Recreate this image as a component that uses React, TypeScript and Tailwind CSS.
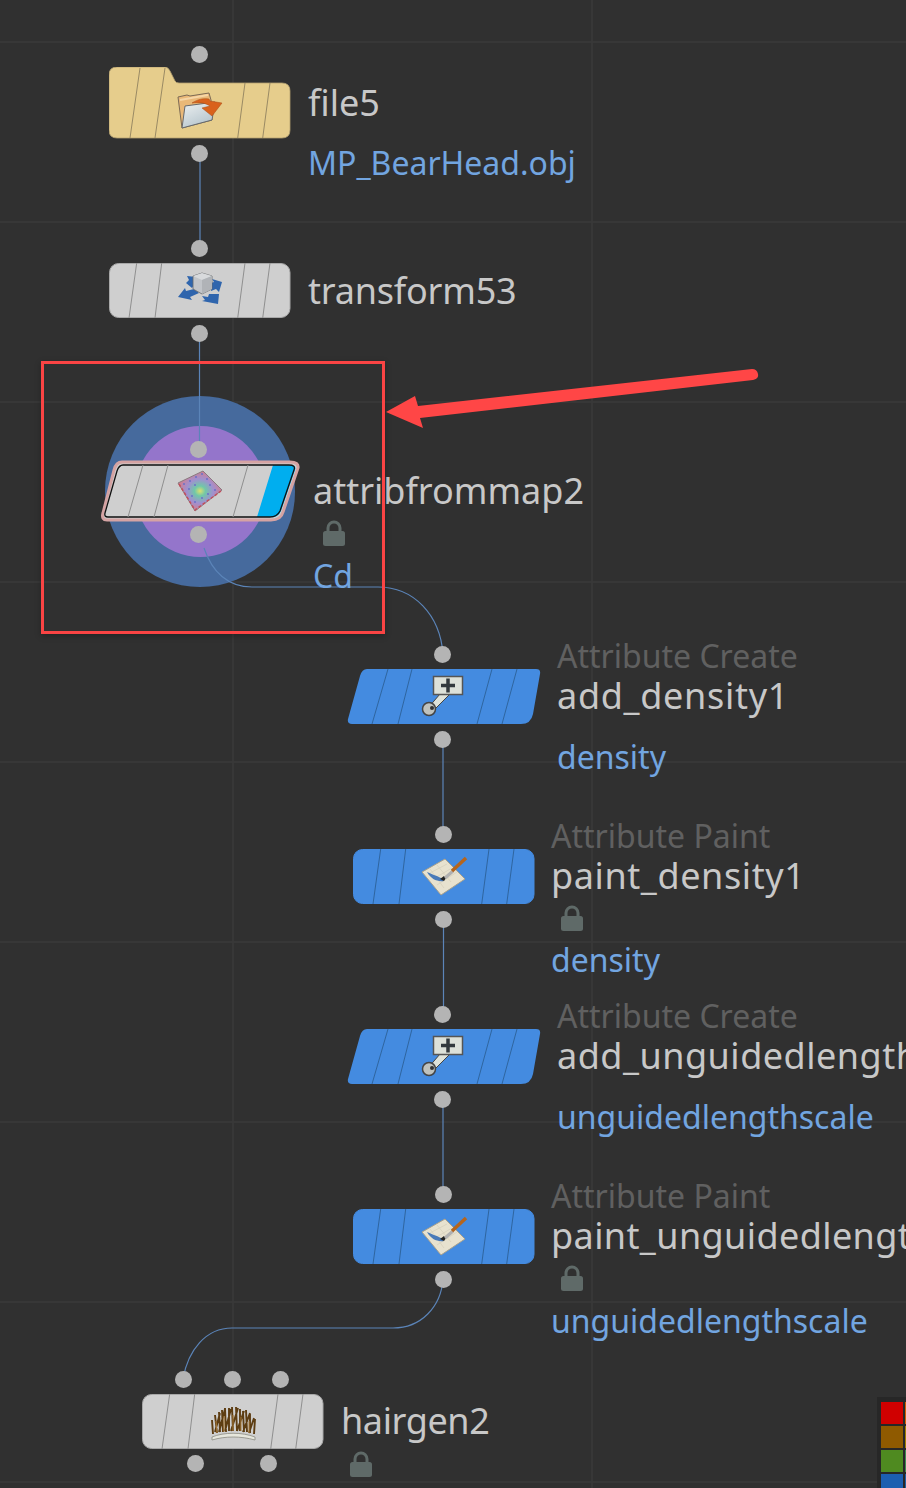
const wire = "#5b84b8"

// little grey connector dots, page coordinates
const dots: { key: string; cn: string }[] = [
  { key: "a", cn: "left-[191px] top-[46px]" },
  { key: "b", cn: "left-[191px] top-[145px]" },
  { key: "c", cn: "left-[191px] top-[240px]" },
  { key: "d", cn: "left-[191px] top-[325px]" },
  { key: "e", cn: "left-[190px] top-[441px]" },
  { key: "f", cn: "left-[190px] top-[526px]" },
  { key: "g", cn: "left-[434px] top-[646px]" },
  { key: "h", cn: "left-[434px] top-[731px]" },
  { key: "i", cn: "left-[435px] top-[826px]" },
  { key: "j", cn: "left-[435px] top-[911px]" },
  { key: "k", cn: "left-[434px] top-[1006px]" },
  { key: "l", cn: "left-[434px] top-[1091px]" },
  { key: "m", cn: "left-[435px] top-[1186px]" },
  { key: "n", cn: "left-[435px] top-[1271px]" },
  { key: "o", cn: "left-[175px] top-[1371px]" },
  { key: "p", cn: "left-[224px] top-[1371px]" },
  { key: "q", cn: "left-[272px] top-[1371px]" },
  { key: "r", cn: "left-[187px] top-[1455px]" },
  { key: "s", cn: "left-[260px] top-[1455px]" },
]

const name = "text-[36px] text-[#c8c8c8]"
const sub = "text-[32px] text-[#72a5e0]"
const kind = "text-[32px] text-[#606060]"

const labels: { text: string; cn: string }[] = [
  { text: "file5", cn: `left-[308px] top-[79px] ${name}` },
  { text: "MP_BearHead.obj", cn: `left-[308px] top-[139px] ${sub}` },
  { text: "transform53", cn: `left-[308px] top-[267px] tracking-[-0.2px] ${name}` },
  { text: "attribfrommap2", cn: `left-[313px] top-[467px] ${name}` },
  { text: "Cd", cn: `left-[313px] top-[552px] ${sub}` },
  { text: "Attribute Create", cn: `left-[557px] top-[632px] ${kind}` },
  { text: "add_density1", cn: `left-[557px] top-[672px] tracking-[0.7px] ${name}` },
  { text: "density", cn: `left-[557px] top-[733px] ${sub}` },
  { text: "Attribute Paint", cn: `left-[551px] top-[812px] ${kind}` },
  { text: "paint_density1", cn: `left-[551px] top-[852px] tracking-[0.6px] ${name}` },
  { text: "density", cn: `left-[551px] top-[936px] ${sub}` },
  { text: "Attribute Create", cn: `left-[557px] top-[992px] ${kind}` },
  { text: "add_unguidedlengthscale", cn: `left-[557px] top-[1032px] tracking-[0.5px] ${name}` },
  { text: "unguidedlengthscale", cn: `left-[557px] top-[1093px] ${sub}` },
  { text: "Attribute Paint", cn: `left-[551px] top-[1172px] ${kind}` },
  { text: "paint_unguidedlengthscale", cn: `left-[551px] top-[1212px] tracking-[0.4px] ${name}` },
  { text: "unguidedlengthscale", cn: `left-[551px] top-[1297px] ${sub}` },
  { text: "hairgen2", cn: `left-[341px] top-[1397px] tracking-[-0.4px] ${name}` },
]

const Lock = ({ cn }: { cn: string }) => (
  <svg className={`absolute ${cn}`} width="22" height="26" viewBox="0 0 22 26">
    <path d="M5 12V8a6 6 0 0 1 12 0v4" fill="none" stroke="#5f6a68" strokeWidth="3" />
    <rect x="0" y="11" width="22" height="15" rx="2.5" fill="#5f6a68" />
  </svg>
)

const Stripes = ({ lines, color = "#8f8f8f" }: { lines: number[][]; color?: string }) => (
  <g stroke={color} strokeWidth="1">
    {lines.map((l) => (
      <line key={l[0]} x1={l[0]} y1="0" x2={l[1]} y2="55" />
    ))}
  </g>
)

const straightLines = [[27.7, 20], [52.7, 46], [136, 128.7], [161, 153.7]]
const slantLines = [[41, 25], [65, 51], [145, 130], [170, 155]]

const FolderIcon = () => (
  <g>
    <defs>
      <linearGradient id="paper" x1="0" y1="0" x2="0.6" y2="1">
        <stop offset="0" stopColor="#eef1f2" />
        <stop offset="1" stopColor="#b4c4cc" />
      </linearGradient>
    </defs>
    <path d="M-1 5l9-2 3 1 19-3 2 7 1 20L3 36z" fill="#e9b878" stroke="#7c6a55" strokeWidth="1" />
    <path d="M1 8l28-5" stroke="#f6d6a6" strokeWidth="2" />
    <path d="M6 14l30-4-3 18L3 36z" fill="url(#paper)" stroke="#66696c" strokeWidth="1" />
    <path d="M13 11c6-4 12-5 17-4l1 2 12 2-10 13-10-8 8-2c-4-3-11-4-18-3z" fill="#d9621c" stroke="#a84a14" strokeWidth="0.5" />
  </g>
)

const CubeIcon = () => (
  <g>
    {/* four flat arrows */}
    <path d="M9 4l9 1 1 9-3-1-2 3-6-5 3-3z" fill="#2f65ad" />
    <path d="M0 25l7-9 1 3 8-2 5 4-9 4 2 3z" fill="#2f65ad" />
    <path d="M24 24l6 1 1-3 10 0-1 10-16-3 3-1z" fill="#2f65ad" />
    <path d="M34 7l10 3-3 10-3-3-5 2 0-8 3-1z" fill="#2f65ad" />
    {/* cube */}
    <path d="M15 4l9-3 10 3v13l-10 5-9-5z" fill="#c2c5c9" stroke="#66686b" strokeWidth="0.8" />
    <path d="M15 4l9-3 10 3-10 4z" fill="#d8dadc" />
    <path d="M24 8l10-4v13l-10 5z" fill="#b0b3b7" />
  </g>
)

const mapDots: number[][] = [
  [6, 13], [12, 10], [18, 6], [24, 3],
  [11, 18], [17, 14], [29, 8],
  [14, 25], [32, 14], [37, 19],
  [17, 31], [24, 27], [30, 23],
]

const MapIcon = () => (
  <g>
    <defs>
      <radialGradient id="heat">
        <stop offset="0" stopColor="#dce070" />
        <stop offset="0.25" stopColor="#70c8a8" />
        <stop offset="0.6" stopColor="#a090d0" />
        <stop offset="1" stopColor="#cf7f90" />
      </radialGradient>
    </defs>
    <path d="M0 12L25 0l19 19-27 21z" fill="url(#heat)" stroke="#8a7a80" strokeWidth="1" />
    <path d="M1 13l16 26 26-19" fill="none" stroke="#c2505c" strokeWidth="1.5" strokeDasharray="3 2" />
    {mapDots.map((d) => (
      <circle key={`${d[0]}-${d[1]}`} cx={d[0]} cy={d[1]} r="1" fill="#6a70c8" />
    ))}
  </g>
)

const AttribCreateIcon = () => (
  <g>
    <path d="M21 19l-12 14 5 3 17-17z" fill="#dfe3da" stroke="#444" strokeWidth="1" />
    <rect x="14.500" y="1.500" width="29" height="18" fill="#dde1d9" stroke="#555" strokeWidth="1.500" />
    <path d="M29 3.500v14M22 10.500h14" stroke="#33393d" strokeWidth="3.500" />
    <circle cx="10" cy="34" r="6.500" fill="#bfc2bd" stroke="#444" strokeWidth="1.500" />
    <circle cx="13" cy="33" r="2" fill="#333" />
  </g>
)

const PaintIcon = () => (
  <g>
    <path d="M0 14L23 1l20 20-24 16z" fill="#e8e2cf" stroke="#a8a08c" strokeWidth="1" />
    <path d="M6 16l19-10M11 21l19-11M15 27l20-13M8 11l14 19M15 7l14 17" stroke="#d6d0bc" strokeWidth="0.7" />
    <path d="M5 14c4 2 8 3 14 6l3 3c-7 1-13-2-17-9z" fill="#4a7ab8" />
    <path d="M18 21l4-3 2 2-2 3z" fill="#222" />
    <path d="M23 20l8-7" stroke="#b0b0b0" strokeWidth="3" />
    <path d="M30 13L44 0" stroke="#b5651d" strokeWidth="3.500" />
  </g>
)

const HairIcon = () => (
  <g>
    <path d="M1 30c12-5 30-5 43 0v3c-14-4-30-4-43 0z" fill="#e6e6dc" stroke="#8a8a80" strokeWidth="0.8" />
    <path
      d="M2 27L1 13M6 26L4 8M9 25L8 5M12 25L11 3M15 25L14 1M18 24L18 1M22 24L21 0M26 24L25 0M29 24L29 2M33 25L32 4M36 25L35 3M39 26L39 7M43 27L44 12M4 25L9 6M8 25L14 2M14 24L20 2M20 24L27 1M26 24L33 4M32 25L39 6M38 26L43 11"
      stroke="#5d3d12"
      strokeWidth="1.900"
      fill="none"
    />
    <path d="M6 26L5 14M13 25L13 9M22 24L22 8M30 24L30 10M38 26L38 14" stroke="#a87a38" strokeWidth="1" fill="none" />
  </g>
)

const RectNode = ({ cn, fill, border, children }: { cn: string; fill: string; border: string; children: React.ReactNode }) => (
  <svg className={`absolute ${cn}`} width="182" height="56" viewBox="0 0 182 56">
    <rect x="0.500" y="0.500" width="180.500" height="54" rx="9" fill={fill} stroke={border} />
    <Stripes lines={straightLines} color={fill === "#cfcfcf" ? "#8f8f8f" : "#2f659f"} />
    {children}
  </svg>
)

const SlantNode = ({ cn }: { cn: string }) => (
  <svg className={`absolute ${cn}`} width="194" height="56" viewBox="0 0 194 56">
    <path d="M20 0H189q5 0 4 5l-7 40q-2 10-12 10H5q-5 0-4-5L13 7q2-7 7-7z" fill="#448be0" />
    <Stripes lines={slantLines} color="#2f659f" />
    <g transform="translate(72 6)">
      <AttribCreateIcon />
    </g>
  </svg>
)

export default function App() {
  return (
    <div className="relative w-[906px] h-[1488px] overflow-hidden bg-[#303030] font-['Noto_Sans',sans-serif] leading-[48px]">
      {/* grid */}
      <svg className="absolute inset-0" width="906" height="1488" viewBox="0 0 906 1488">
        <g stroke="#3a3a3a" strokeWidth="1.500">
          {[42, 222, 402, 582, 762, 942, 1122, 1302, 1482].map((y) => (
            <line key={y} x1="0" y1={y} x2="906" y2={y} />
          ))}
          <line x1="233" y1="0" x2="233" y2="1488" />
          <line x1="592" y1="0" x2="592" y2="1488" />
        </g>
      </svg>

      <div className="absolute left-[105px] top-[396px] flex h-[191px] w-[190px] items-center justify-center rounded-full bg-[#466a9d]">
        <div className="h-[131px] w-[131px] rounded-full bg-[#9475cb]" />
      </div>

      {/* wires */}
      <svg className="absolute inset-0" width="906" height="1488" viewBox="0 0 906 1488" fill="none" stroke={wire} strokeWidth="1.200">
        <path d="M200 153V248M199.500 333V449" />
        <path d="M204 548c8 24 24 39 48 39H378c36 0 62 28 65 67" />
        <path d="M443 739V834M443.500 919V1014M443 1099V1194" />
        <path d="M443 1279c-2 28-22 49-50 49H232c-26 0-44 22-49 51" />
      </svg>

      {/* nodes */}
      <svg className="absolute left-[109px] top-[67px]" width="182" height="72" viewBox="0 0 182 72">
        <path
          d="M8 0H56q3 0 5 4l5 10q1 2 4 2H173q8 0 8 8V63q0 8-8 8H8q-8 0-8-8V8q0-8 8-8z"
          fill="#e6cd8c"
          stroke="#b3a070"
          strokeWidth="0.800"
        />
        <path d="M31 1L21 71M56 1L46 71M136 16L128.700 71M161 16L153.700 71" stroke="#9a8a64" strokeWidth="1" />
        <g transform="translate(70 25)">
          <FolderIcon />
        </g>
      </svg>

      <RectNode cn="left-[109px] top-[263px]" fill="#cfcfcf" border="#a8a8a8">
        <g transform="translate(69 9)">
          <CubeIcon />
        </g>
      </RectNode>

      <svg className="absolute left-[100px] top-[460px]" width="200" height="62" viewBox="0 0 200 62">
        <path
          d="M22 2H190q9 0 8 6l-15 44q-2 8-12 8H7q-6 0-4-7L14 10q2-8 8-8z"
          fill="#cfcfcf"
          stroke="#d5a3a3"
          strokeWidth="3"
        />
        <path d="M173 5h17q7 0 5 5l-14 41q-3 7-10 6h-14z" fill="#00aeef" />
        <path
          d="M23 5H189q7 0 5 5l-14 41q-3 6-10 6H8q-4 0-3-4L17 11q2-6 6-6z"
          fill="none"
          stroke="#111"
          strokeWidth="1.300"
        />
        <path d="M43 5L28 57M68 5L54 57M148 5L133 57" stroke="#8f8f8f" strokeWidth="1" />
        <g transform="translate(78 11)">
          <MapIcon />
        </g>
      </svg>

      <SlantNode cn="left-[347px] top-[669px]" />
      <RectNode cn="left-[353px] top-[849px]" fill="#448be0" border="#448be0">
        <g transform="translate(69 9)">
          <PaintIcon />
        </g>
      </RectNode>
      <SlantNode cn="left-[347px] top-[1029px]" />
      <RectNode cn="left-[353px] top-[1209px]" fill="#448be0" border="#448be0">
        <g transform="translate(69 9)">
          <PaintIcon />
        </g>
      </RectNode>
      <RectNode cn="left-[142px] top-[1394px]" fill="#cfcfcf" border="#a8a8a8">
        <g transform="translate(69 13)">
          <HairIcon />
        </g>
      </RectNode>

      {dots.map((d) => (
        <div key={d.key} className={`absolute h-[17px] w-[17px] rounded-full bg-[#b4b4b4] ${d.cn}`} />
      ))}

      {labels.map((l) => (
        <div key={l.text + l.cn} className={`absolute whitespace-nowrap ${l.cn}`}>
          {l.text}
        </div>
      ))}

      <Lock cn="left-[323px] top-[520px]" />
      <Lock cn="left-[561px] top-[905px]" />
      <Lock cn="left-[561px] top-[1265px]" />
      <Lock cn="left-[350px] top-[1451px]" />

      {/* annotation */}
      <div className="absolute left-[41px] top-[361px] h-[273px] w-[344px] border-[3px] border-[#fa4444] shadow-[0_2px_6px_rgba(0,0,0,0.25)]" />
      <svg className="absolute left-[380px] top-[360px]" width="390" height="75" viewBox="0 0 390 75">
        <path d="M6 52L35 36 38 46 372 9q5 0 6 5t-5 6L40 58l3 10z" fill="#ff4646" />
      </svg>

      {/* colour palette, cut off by the window */}
      <div className="absolute left-[877px] top-[1397px] grid h-[91px] w-[29px] grid-cols-[22px_22px] gap-[2px] overflow-hidden bg-[#272727] pl-[4px] pt-[5px]">
        <div className="h-[22px] bg-[#d00000]" />
        <div className="h-[22px] bg-[#d06000]" />
        <div className="h-[22px] bg-[#8f5a00]" />
        <div className="h-[22px] bg-[#a08000]" />
        <div className="h-[22px] bg-[#4f8a20]" />
        <div className="h-[22px] bg-[#3f8a50]" />
        <div className="h-[22px] bg-[#1c5fb0]" />
        <div className="h-[22px] bg-[#2060a0]" />
      </div>
    </div>
  )
}
